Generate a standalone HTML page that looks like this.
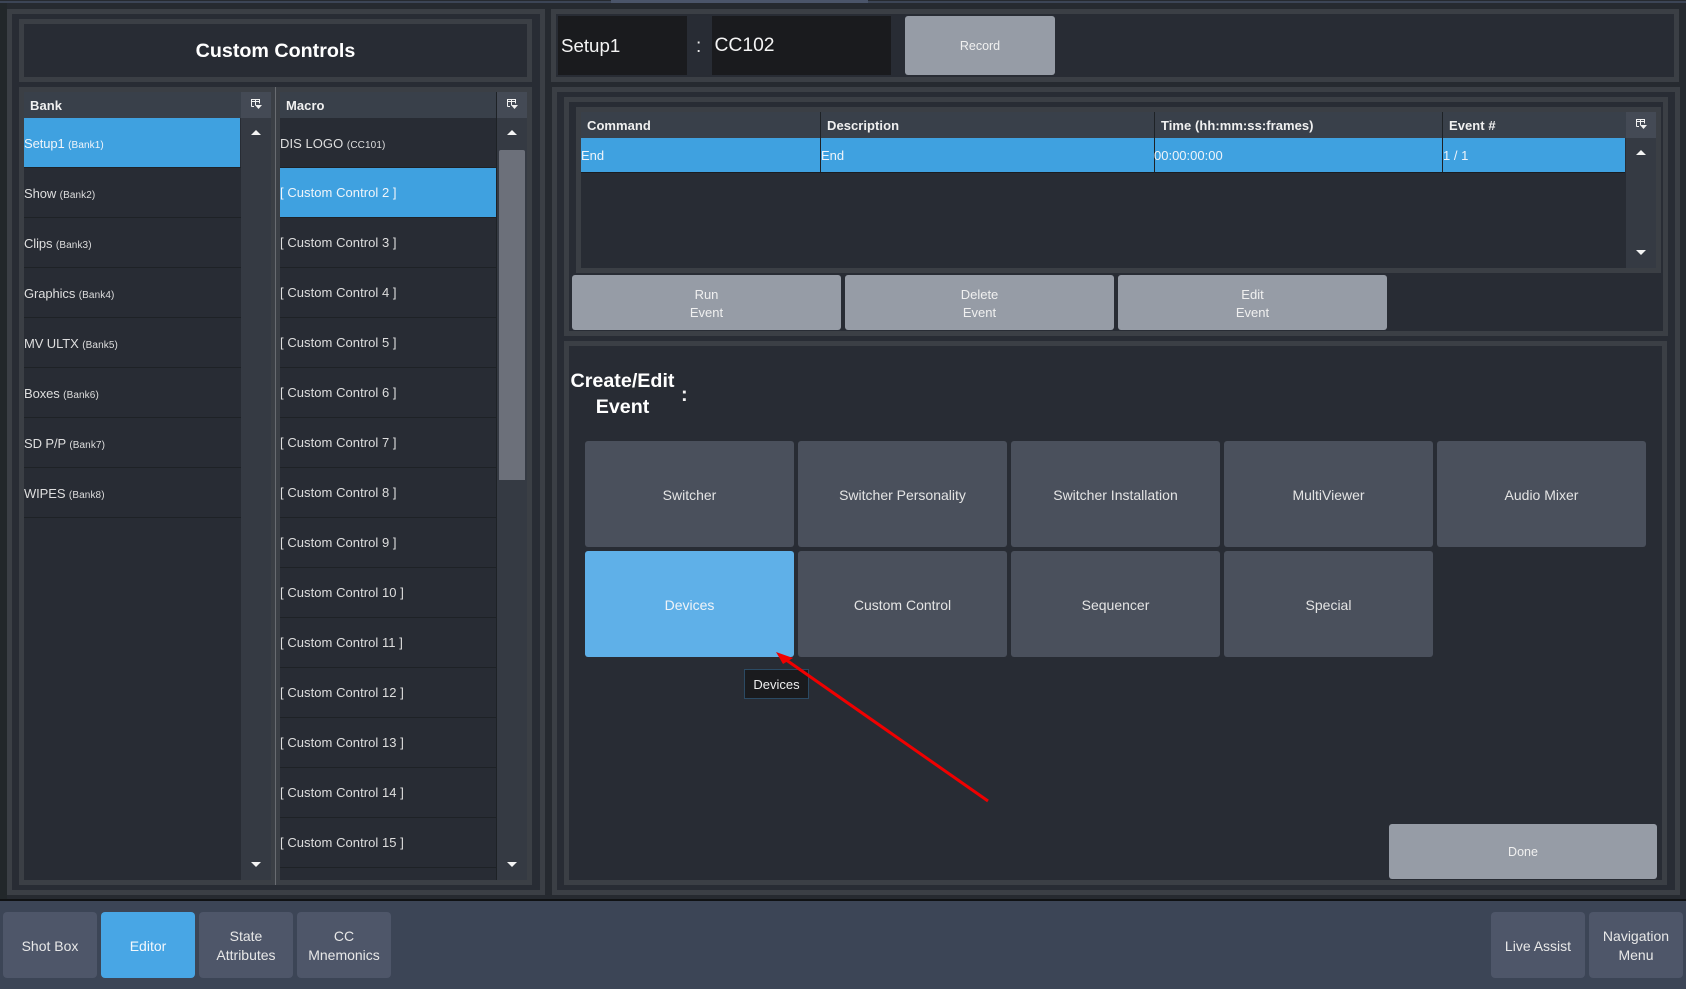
<!DOCTYPE html>
<html lang="en"><head><meta charset="utf-8"><title>Custom Controls</title>
<style>
html,body{margin:0;padding:0;background:#262a30;width:1686px;height:989px;overflow:hidden}
body{position:relative;font-family:"Liberation Sans",Arial,sans-serif;color:#e6e6e6;font-size:13px}
div,svg{position:absolute;box-sizing:border-box}
.box{border:5px solid #3b3f45;background:#282c34}
.hd{background:#39404a;height:26px;top:0}
.ht{font-weight:bold;font-size:13px;letter-spacing:.05px;color:#f0f0f0;line-height:16px;white-space:nowrap}
.ic{background:#444a55}
.sc{background:#353a43}
.r{left:0;width:217px;height:50px;line-height:52px;border-bottom:1px solid #1e2226;white-space:nowrap;padding-left:0;color:#dedede;letter-spacing:-.1px}
.m{width:217px;letter-spacing:.05px;line-height:50px}
.r small{font-size:10px;letter-spacing:.1px}
.sel{background:#3fa1e0;color:#f0f5fa}
.gb{background:#969ca6;border-radius:3px;color:#f0f0f0;font-size:12.5px;text-align:center;line-height:18px;white-space:nowrap}
.tb{background:#4a505c;border-radius:3px;width:209px;height:106px;line-height:108px;text-align:center;font-size:14px;color:#e4e4e4;white-space:nowrap}
.bb{background:#4e5669;border-radius:4px;top:912px;width:94px;height:66px;text-align:center;font-size:14px;line-height:19px;color:#e8e8e8;white-space:nowrap}
.cell{top:139px;height:34px;line-height:34px;color:#eef4fa;white-space:nowrap;font-size:13px}
.sep{width:1px;background:#1e2226;top:112px;height:60px}
</style></head><body>
<div style="left:0;top:0;width:1686px;height:3px;background:#3c4556"></div>
<div style="left:0;top:0;width:611px;height:1px;background:#262a30"></div>
<div style="left:868px;top:0;width:818px;height:1px;background:#262a30"></div>
<div style="left:611px;top:0;width:257px;height:3px;background:#4b556a"></div>
<div style="left:0;top:3px;width:7px;height:897px;background:#22272a"></div>

<!-- LEFT PANEL -->
<div class="box" style="left:7px;top:9px;width:538px;height:886px"></div>
<div class="box" style="left:19px;top:19px;width:513px;height:63px"></div>
<div style="left:19px;top:38px;width:513px;text-align:center;font-weight:bold;font-size:19.7px;line-height:26px;color:#fff">Custom Controls</div>

<div style="left:19px;top:87px;width:513px;height:798px;background:#3b3f45"></div>
<div style="left:275px;top:87px;width:1px;height:798px;background:#686b70"></div>

<!-- Bank list -->
<div style="left:24px;top:92px;width:247px;height:788px;background:#282c34">
  <div class="hd" style="left:0;width:217px"></div>
  <div class="ht" style="left:6px;top:6px">Bank</div>
  <div class="sc" style="left:217px;top:0;width:30px;height:788px"></div>
  <div class="ic" style="left:217px;top:0;width:30px;height:26px"></div>
  <div class="r sel" style="top:26px;height:49px;border-bottom:0;width:216px">Setup1 <small>(Bank1)</small></div>
  <div class="r" style="top:76px">Show <small>(Bank2)</small></div>
  <div class="r" style="top:126px">Clips <small>(Bank3)</small></div>
  <div class="r" style="top:176px">Graphics <small>(Bank4)</small></div>
  <div class="r" style="top:226px">MV ULTX <small>(Bank5)</small></div>
  <div class="r" style="top:276px">Boxes <small>(Bank6)</small></div>
  <div class="r" style="top:326px">SD P/P <small>(Bank7)</small></div>
  <div class="r" style="top:376px">WIPES <small>(Bank8)</small></div>
  <div style="left:0;top:75px;width:217px;height:1px;background:#1e2226"></div>
</div>

<!-- Macro list -->
<div style="left:280px;top:92px;width:247px;height:788px;background:#282c34;overflow:hidden">
  <div class="hd" style="left:0;width:217px"></div>
  <div class="ht" style="left:6px;top:6px">Macro</div>
  <div class="sc" style="left:217px;top:0;width:30px;height:788px"></div>
  <div class="ic" style="left:217px;top:0;width:30px;height:26px"></div>
  <div style="left:216px;top:0;width:1px;height:788px;background:#1e2226"></div>
  <div class="r m" style="top:26px;line-height:52px">DIS LOGO <small>(CC101)</small></div>
  <div class="r m sel" style="top:76px;height:49px;border-bottom:0;width:216px">[ Custom Control 2 ]</div>
  <div style="left:0;top:125px;width:216px;height:1px;background:#1e2226"></div>
  <div class="r m" style="top:126px">[ Custom Control 3 ]</div>
  <div class="r m" style="top:176px">[ Custom Control 4 ]</div>
  <div class="r m" style="top:226px">[ Custom Control 5 ]</div>
  <div class="r m" style="top:276px">[ Custom Control 6 ]</div>
  <div class="r m" style="top:326px">[ Custom Control 7 ]</div>
  <div class="r m" style="top:376px">[ Custom Control 8 ]</div>
  <div class="r m" style="top:426px">[ Custom Control 9 ]</div>
  <div class="r m" style="top:476px">[ Custom Control 10 ]</div>
  <div class="r m" style="top:526px">[ Custom Control 11 ]</div>
  <div class="r m" style="top:576px">[ Custom Control 12 ]</div>
  <div class="r m" style="top:626px">[ Custom Control 13 ]</div>
  <div class="r m" style="top:676px">[ Custom Control 14 ]</div>
  <div class="r m" style="top:726px">[ Custom Control 15 ]</div>
  <div style="left:219px;top:58px;width:26px;height:330px;background:#6c707a;border-radius:2px 2px 0 0"></div>
</div>

<!-- icons & arrows, left -->
<svg style="left:251px;top:99px" width="12" height="11" viewBox="0 0 12 11"><path d="M.5 7.500V.5h8v4M.5 2.500h8M4.500 .5v6M.5 7.500h2.500" fill="none" stroke="#f2f2f2" stroke-width="1"/><path d="M4 6h7L7.500 10z" fill="#f2f2f2"/></svg>
<svg style="left:507px;top:99px" width="12" height="11" viewBox="0 0 12 11"><path d="M.5 7.500V.5h8v4M.5 2.500h8M4.500 .5v6M.5 7.500h2.500" fill="none" stroke="#f2f2f2" stroke-width="1"/><path d="M4 6h7L7.500 10z" fill="#f2f2f2"/></svg>
<svg style="left:251px;top:130px" width="10" height="5"><path d="M5 0L10 5H0z" fill="#f4f4f4"/></svg>
<svg style="left:507px;top:130px" width="10" height="5"><path d="M5 0L10 5H0z" fill="#f4f4f4"/></svg>
<svg style="left:251px;top:862px" width="10" height="5"><path d="M0 0H10L5 5z" fill="#f4f4f4"/></svg>
<svg style="left:507px;top:862px" width="10" height="5"><path d="M0 0H10L5 5z" fill="#f4f4f4"/></svg>

<!-- RIGHT TOP -->
<div class="box" style="left:551px;top:9px;width:1128px;height:73px"></div>
<div style="left:558px;top:16px;width:129px;height:59px;background:#1a1b1e"></div>
<div style="left:712px;top:16px;width:179px;height:59px;background:#1a1b1e"></div>
<div style="left:561px;top:34px;font-size:18.7px;line-height:24px;color:#f4f4f4">Setup1</div>
<div style="left:696px;top:35px;font-size:19px;line-height:24px;color:#e8e8e8">:</div>
<div style="left:714.500px;top:34px;font-size:19.300px;line-height:24px;color:#f4f4f4">CC102</div>
<div class="gb" style="left:905px;top:16px;width:150px;height:59px;line-height:61px">Record</div>

<!-- RIGHT MIDDLE -->
<div class="box" style="left:552px;top:87px;width:1128px;height:808px"></div>
<div class="box" style="left:564px;top:97px;width:1104px;height:239px"></div>
<div class="box" style="left:576px;top:107px;width:1085px;height:166px"></div>
<div style="left:581px;top:112px;width:1045px;height:26px;background:#39404a"></div>
<div class="ic" style="left:1626px;top:112px;width:30px;height:26px"></div>
<div class="sc" style="left:1626px;top:138px;width:30px;height:130px"></div>
<div class="sel" style="left:581px;top:138px;width:1044px;height:34px"></div>
<div style="left:581px;top:172px;width:1044px;height:1px;background:#1a1d21"></div>
<div class="sep" style="left:820px"></div>
<div class="sep" style="left:1154px"></div>
<div class="sep" style="left:1442px"></div>
<div class="ht" style="left:587px;top:118px">Command</div>
<div class="ht" style="left:827px;top:118px">Description</div>
<div class="ht" style="left:1161px;top:118px">Time (hh:mm:ss:frames)</div>
<div class="ht" style="left:1449px;top:118px">Event #</div>
<div class="cell" style="left:581px">End</div>
<div class="cell" style="left:821px">End</div>
<div class="cell" style="left:1154px">00:00:00:00</div>
<div class="cell" style="left:1443px">1 / 1</div>
<svg style="left:1636px;top:119px" width="12" height="11" viewBox="0 0 12 11"><path d="M.5 7.500V.5h8v4M.5 2.500h8M4.500 .5v6M.5 7.500h2.500" fill="none" stroke="#f2f2f2" stroke-width="1"/><path d="M4 6h7L7.500 10z" fill="#f2f2f2"/></svg>
<svg style="left:1636px;top:150px" width="10" height="5"><path d="M5 0L10 5H0z" fill="#f4f4f4"/></svg>
<svg style="left:1636px;top:250px" width="10" height="5"><path d="M0 0H10L5 5z" fill="#f4f4f4"/></svg>

<div class="gb" style="left:572px;top:275px;width:269px;height:55px;padding-top:11px;font-size:13px">Run<br>Event</div>
<div class="gb" style="left:845px;top:275px;width:269px;height:55px;padding-top:11px;font-size:13px">Delete<br>Event</div>
<div class="gb" style="left:1118px;top:275px;width:269px;height:55px;padding-top:11px;font-size:13px">Edit<br>Event</div>

<!-- CREATE/EDIT -->
<div class="box" style="left:564px;top:341px;width:1103px;height:544px"></div>
<div style="left:560px;top:368px;width:125px;text-align:center;font-weight:bold;font-size:19.700px;line-height:26px;color:#fff">Create/Edit<br>Event</div>
<div style="left:681px;top:382px;font-weight:bold;font-size:20px;line-height:26px;color:#f4f4f4">:</div>

<div class="tb" style="left:585px;top:441px">Switcher</div>
<div class="tb" style="left:798px;top:441px">Switcher Personality</div>
<div class="tb" style="left:1011px;top:441px">Switcher Installation</div>
<div class="tb" style="left:1224px;top:441px">MultiViewer</div>
<div class="tb" style="left:1437px;top:441px">Audio Mixer</div>
<div class="tb" style="left:585px;top:551px;background:#5fb0e8;color:#f0f4f8">Devices</div>
<div class="tb" style="left:798px;top:551px">Custom Control</div>
<div class="tb" style="left:1011px;top:551px">Sequencer</div>
<div class="tb" style="left:1224px;top:551px">Special</div>

<div style="left:744px;top:669px;width:65px;height:30px;background:#1a1b1e;border:1px solid #2b4a63;line-height:30px;text-align:center;font-size:13px;color:#eee">Devices</div>

<svg style="left:0;top:0" width="1686" height="989"><line x1="988" y1="801" x2="782" y2="657" stroke="#f00000" stroke-width="3"/><path d="M776 652L793 658L783 664z" fill="#f00000"/></svg>

<div class="gb" style="left:1389px;top:824px;width:268px;height:55px;line-height:57px">Done</div>

<!-- BOTTOM BAR -->
<div style="left:0;top:899px;width:1686px;height:2px;background:#101214"></div>
<div style="left:0;top:901px;width:1686px;height:88px;background:#3c4556"></div>
<div class="bb" style="left:3px;line-height:68px">Shot Box</div>
<div class="bb" style="left:101px;line-height:68px;background:#48a6e5;color:#f4f8fc">Editor</div>
<div class="bb" style="left:199px;padding-top:15px">State<br>Attributes</div>
<div class="bb" style="left:297px;padding-top:15px">CC<br>Mnemonics</div>
<div class="bb" style="left:1491px;line-height:68px">Live Assist</div>
<div class="bb" style="left:1589px;padding-top:15px">Navigation<br>Menu</div>
</body></html>
